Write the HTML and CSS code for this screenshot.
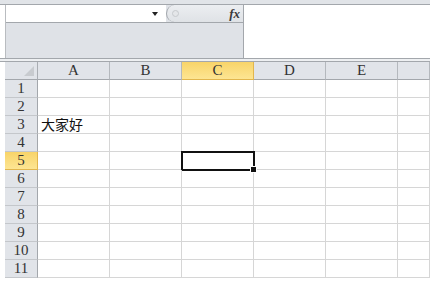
FILE: index.html
```html
<!DOCTYPE html>
<html lang="zh-CN">
<head>
  <meta charset="UTF-8" />
  <title>Sheet1</title>
  <link rel="stylesheet" href="styles.css">
</head>
<body>

  <!-- faixa superior -->
  <div class="top-strip"></div>

  <!-- barra de fórmulas -->
  <div class="formula-bar">
    <div class="fb-left">
      <div class="name-row">
        <div class="name-box"><span class="caret"></span></div>
        <div class="fx-pill">
          <span class="knob"></span>
          <span class="fx">fx</span>
        </div>
      </div>
    </div>
    <div class="fb-input"></div>
  </div>
  <div class="gap-band"></div>

  <!-- planilha -->
  <div class="sheet" id="sheet"></div>

  <script>
    // monta a grade
    const cols = ['A', 'B', 'C', 'D', 'E', ''];
    const sheet = document.getElementById('sheet');
    let html = '<div class="corner"><span class="tri"></span></div>';
    cols.forEach(c => {
      html += '<div class="col-head' + (c === 'C' ? ' active' : '') + '">' + c + '</div>';
    });
    for (let r = 1; r <= 11; r++) {
      html += '<div class="row-head' + (r === 5 ? ' active' : '') + '">' + r + '</div>';
      cols.forEach(c => {
        let text = (r === 3 && c === 'A') ? '大家好' : '';
        let cls = 'cell' + (r === 5 && c === 'C' ? ' selected' : '');
        html += '<div class="' + cls + '">' + text + '</div>';
      });
    }
    sheet.innerHTML = html;
  </script>
</body>
</html>
```

FILE: styles.css
```css
* { margin: 0; padding: 0; box-sizing: border-box; }
body, html { width: 100%; height: 100%; overflow: hidden; background: #fff; font-family: "Liberation Serif", "Noto Sans CJK SC", serif; color: #333; }

/* Faixa superior */
.top-strip { height: 5px; background: #e1e4e8; border-bottom: 1px solid #a3a7ac; }

/* Barra de fórmulas */
.formula-bar { display: flex; height: 54px; padding-left: 5px; border-bottom: 1px solid #a3a7ac; }
.fb-left { width: 238px; background: #dfe2e7; border-left: 1px solid #b9bcc0; }
.name-row { display: flex; height: 18px; border-bottom: 1px solid #a3a7ac; }
.name-box { position: relative; width: 160px; background: #fff; }
.caret { position: absolute; right: 8px; top: 7px; border-left: 3px solid transparent; border-right: 3px solid transparent; border-top: 4px solid #222; }
.fx-pill { flex: 1; display: flex; align-items: center; justify-content: space-between; padding: 0 3px 0 5px; background: linear-gradient(#eceef1, #dfe2e6); border-left: 1px solid #a3a7ac; border-radius: 9px 0 0 9px; }
.knob { width: 7px; height: 7px; border-radius: 50%; border: 1px solid #c6c9cd; background: #e4e6e9; }
.fx { font-family: "Liberation Serif", serif; font-style: italic; font-weight: bold; font-size: 13px; color: #3a3a3a; }
.fb-input { flex: 1; background: #fff; border-left: 1px solid #a3a7ac; }
.gap-band { height: 3px; background: #eef0f2; border-bottom: 1px solid #a3a7ac; }

/* Planilha */
.sheet { display: grid; grid-template-columns: 33px repeat(5, 72px) 32px; grid-auto-rows: 18px; padding-left: 5px; }
.corner { position: relative; background: #e1e4e9; border-right: 1px solid #a9adb2; border-bottom: 1px solid #a3a7ac; }
.tri { position: absolute; right: 3px; bottom: 3px; width: 0; height: 0; border-left: 10px solid transparent; border-bottom: 10px solid #c8cbcf; }
.col-head { display: flex; align-items: center; justify-content: center; font-size: 15px; background: #e1e4e9; border-right: 1px solid #b4b8bd; border-bottom: 1px solid #a3a7ac; }
.row-head { display: flex; align-items: center; justify-content: center; font-size: 15px; background: #e1e4e9; border-right: 1px solid #a3a7ac; border-bottom: 1px solid #c4c7cb; }
.col-head.active, .row-head.active { background: linear-gradient(#f8d469, #fde593); border-color: #e2b64d; }
.cell { position: relative; font-size: 14px; line-height: 17px; padding-left: 3px; color: #111; border-right: 1px solid #d6d6d6; border-bottom: 1px solid #d6d6d6; white-space: nowrap; font-family: "Noto Sans CJK SC", sans-serif; }
.cell.selected::after { content: ""; position: absolute; left: -1px; top: -1px; right: -2px; bottom: -2px; border: 2px solid #111; }
.cell.selected::before { content: ""; position: absolute; right: -4px; bottom: -4px; width: 5px; height: 5px; background: #111; border: 1px solid #fff; z-index: 1; }
```
